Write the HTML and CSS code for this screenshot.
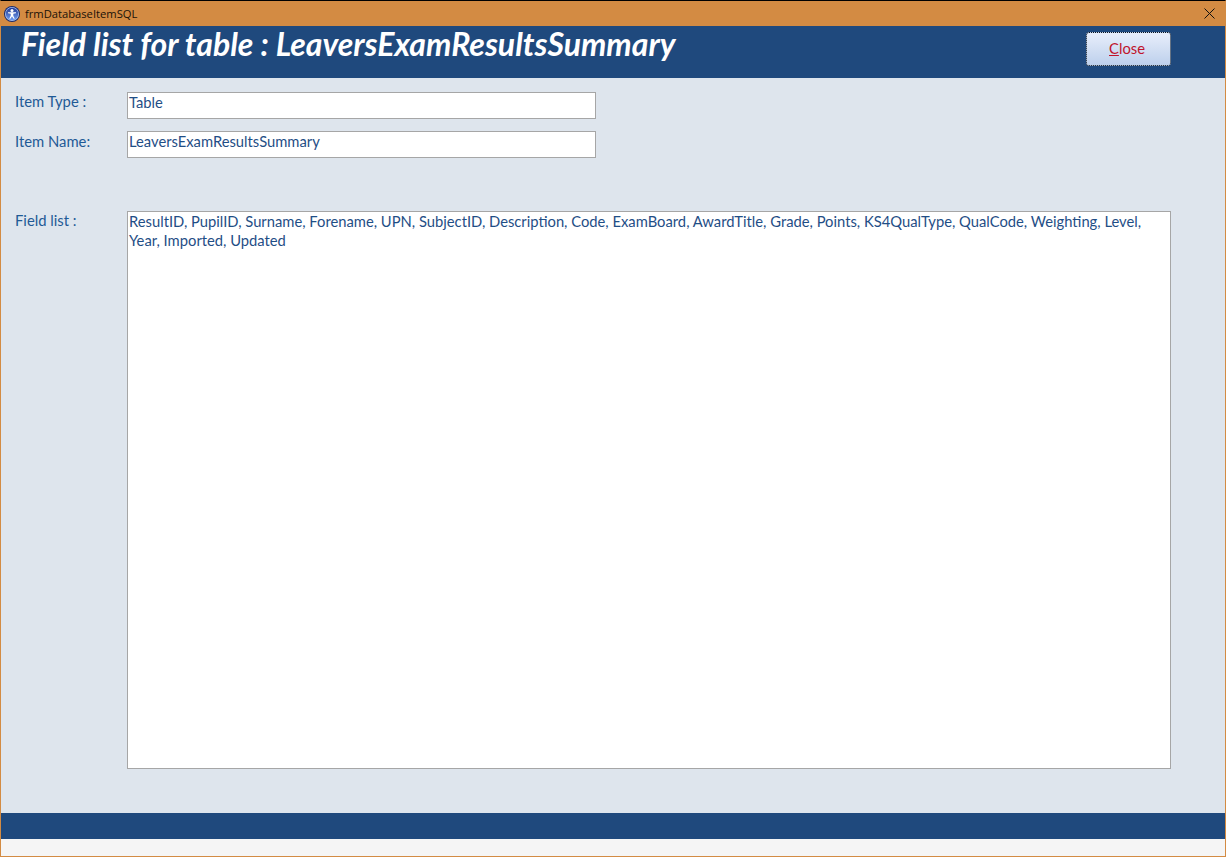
FILE: index.html
```html
<!DOCTYPE html>
<html lang="en">
<head>
<meta charset="utf-8">
<title>frmDatabaseItemSQL</title>
<link rel="stylesheet" href="styles.css">
</head>
<body>
<div class="window">
  <div class="titlebar">
    <svg class="appicon" width="16" height="16" viewBox="0 0 16 16">
      <defs>
        <linearGradient id="gloss" x1="0" y1="0" x2="0" y2="1">
          <stop offset="0" stop-color="#223a94"/>
          <stop offset="1" stop-color="#6f9cf0"/>
        </linearGradient>
      </defs>
      <circle cx="8" cy="8" r="8" fill="#1a2a6c"/>
      <circle cx="8" cy="8" r="7" fill="#a9c2f0"/>
      <circle cx="8" cy="8" r="6.200" fill="url(#gloss)"/>
      <circle cx="8" cy="4.400" r="1.500" fill="#fff"/>
      <path d="M4 6.200h8v1L9.300 7.800v2l1.500 3H9.600L8 10.400 6.400 12.800H5.200l1.500-3v-2L4 7.200z" fill="#fff"/>
    </svg>
    <span class="apptitle">frmDatabaseItemSQL</span>
    <svg class="closex" width="11" height="11" viewBox="0 0 11 11">
      <path d="M.5.500l10 10M10.500.500l-10 10" stroke="#111" stroke-width="1" fill="none"/>
    </svg>
  </div>
  <header class="header">
    <h1 class="heading">Field list for table : LeaversExamResultsSummary</h1>
    <button class="closebtn" type="button"><u>C</u>lose</button>
  </header>
  <main class="form">
    <div class="row row-type">
      <label class="label label-up">Item Type :</label>
      <div class="input short">Table</div>
    </div>
    <div class="row row-name">
      <label class="label">Item Name:</label>
      <div class="input short">LeaversExamResultsSummary</div>
    </div>
    <div class="row row-fields">
      <label class="label label-up">Field list :</label>
      <div class="input area">ResultID, PupilID, Surname, Forename, UPN, SubjectID, Description, Code, ExamBoard, AwardTitle, Grade, Points, KS4QualType, QualCode, Weighting, Level, Year, Imported, Updated</div>
    </div>
  </main>
  <div class="footer"></div>
  <div class="status"></div>
</div>
</body>
</html>
```
FILE: styles.css
```css
* { box-sizing: border-box; }
html, body { margin: 0; padding: 0; }
body {
  width: 1226px;
  height: 857px;
  overflow: hidden;
  font-family: Lato, "Open Sans", sans-serif;
}
.window {
  width: 1226px;
  height: 857px;
  display: flex;
  flex-direction: column;
  border: 1px solid #d38b43;
  border-top: 1px solid #000;
  background: #dee5ed;
}
.titlebar {
  height: 25px;
  margin: 0 -1px;
  padding: 0 11px 0 4px;
  display: flex;
  align-items: center;
  background: #d38b43;
}
.appicon { flex: none; }
.apptitle {
  margin-left: 5px;
  font-family: "Open Sans", sans-serif;
  font-size: 11.200px;
  color: #1a1208;
  flex: 1;
}
.closex { flex: none; }
.header {
  height: 52px;
  flex: none;
  display: flex;
  align-items: flex-start;
  justify-content: space-between;
  padding: 0 54px 0 20px;
  background: #1f497d;
}
.heading {
  margin: 0;
  font-size: 32px;
  line-height: 38px;
  font-weight: 700;
  font-style: italic;
  color: #fff;
  position: relative;
  top: -1px;
}
.closebtn {
  position: relative;
  width: 85px;
  height: 34px;
  margin-top: 6px;
  padding: 0 3px 2px 0;
  border: 1px solid #c3d2e8;
  border-radius: 3px;
  background: linear-gradient(#e8eefb, #bdd0ec);
  font-family: Lato, sans-serif;
  font-size: 14.800px;
  color: #c0142c;
}
.closebtn::after {
  content: "";
  position: absolute;
  inset: -1px;
  border: 1px dotted #0a1420;
  border-radius: 3px;
}
.form {
  flex: 1;
  display: flex;
  flex-direction: column;
  padding: 14px 54px 0 14px;
}
.row {
  display: grid;
  grid-template-columns: 112px 1fr;
}
.row-name { margin-top: 12px; }
.row-fields { margin-top: 53px; }
.label {
  font-size: 14.800px;
  line-height: 20px;
  color: #1f5a96;
}
.label-up { line-height: 19px; }
.input {
  background: #fff;
  border: 1px solid #a6a6a6;
  padding: 0 1px;
  font-size: 14.760px;
  line-height: 19px;
  color: #1f4e86;
}
.short {
  width: 469px;
  height: 27px;
}
.area {
  height: 558px;
}
.footer {
  height: 26px;
  flex: none;
  background: #1f497d;
}
.status {
  height: 17px;
  flex: none;
  background: #f5f5f5;
}
```
